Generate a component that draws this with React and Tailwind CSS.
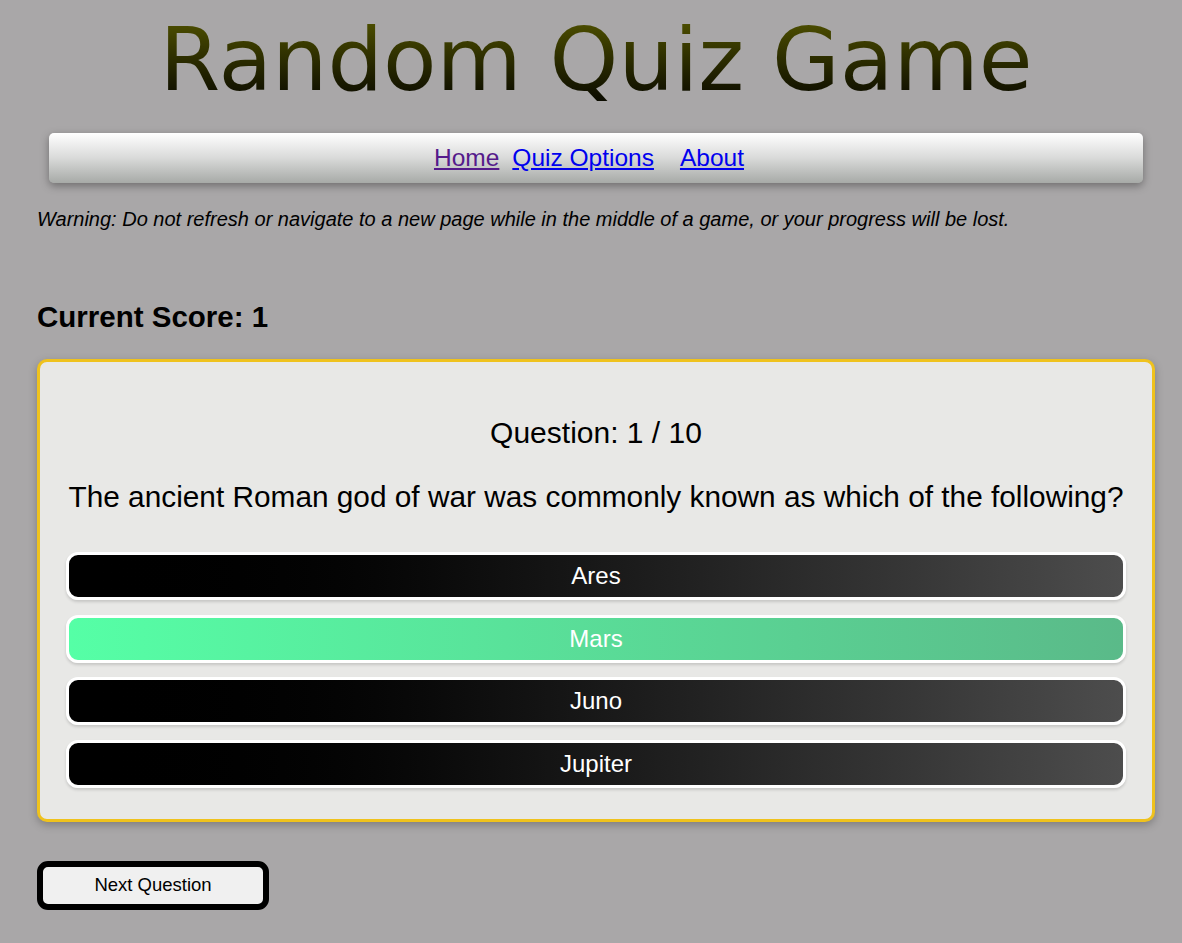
import React from 'react';

const ANSWERS = [
  { label: 'Ares', correct: false },
  { label: 'Mars', correct: true },
  { label: 'Juno', correct: false },
  { label: 'Jupiter', correct: false },
];

export default function App() {
  return (
    <div className="min-h-screen bg-[#a9a7a8] pl-[37px] pr-[27px] pb-8 font-['Liberation_Sans',Arial,sans-serif] text-black">
      {/* title */}
      <h1 className="pt-[8px] text-center font-['DejaVu_Sans',Verdana,sans-serif] text-[87.5px] leading-[104px] bg-gradient-to-b from-[#616300] to-[#050500] bg-clip-text text-transparent">
        Random Quiz Game
      </h1>

      {/* nav */}
      <nav className="mx-[12px] mt-[21px] h-[50px] rounded-[5px] bg-gradient-to-b from-[#ffffff] via-[#d9dad9] to-[#a7aaa7] shadow-[0_3px_8px_rgba(0,0,0,0.35)] flex items-center justify-center">
        <div className="flex items-center text-[24.5px] leading-none pr-[14px]">
          <a href="#" className="underline text-[#551a8b]">Home</a>
          <a href="#" className="underline text-[#0000ee] ml-[13px]">Quiz Options</a>
          <a href="#" className="underline text-[#0000ee] ml-[26px]">About</a>
        </div>
      </nav>

      <p className="mt-[24px] italic text-[20px] leading-[24px]">
        Warning: Do not refresh or navigate to a new page while in the middle of a game, or your progress will be lost.
      </p>

      <h2 className="mt-[69px] font-bold text-[29.5px] leading-[34px]">Current Score: 1</h2>

      {/* question card */}
      <div className="mt-[25px] rounded-[10px] border-[3px] border-[#efc21d] bg-[#e8e8e6] shadow-[0_3px_8px_rgba(0,0,0,0.25)] px-[26px] pt-[53px] pb-[31px]">
        <p className="text-center text-[30px] leading-[36px]">Question: 1 / 10</p>
        <p className="mt-[28px] text-center text-[29.8px] leading-[36px] whitespace-nowrap">
          The ancient Roman god of war was commonly known as which of the following?
        </p>
        <div className="mt-[37px] flex flex-col gap-[14.5px]">
          {ANSWERS.map((a) => (
            <button
              key={a.label}
              className={
                a.correct
                  ? 'h-[48px] w-full rounded-[12px] border-[3px] border-white bg-gradient-to-r from-[#55ffa6] to-[#5aba89] text-white text-[24px] shadow-[0_2px_3px_rgba(0,0,0,0.15)]'
                  : 'h-[48px] w-full rounded-[12px] border-[3px] border-white bg-gradient-to-r from-[#000000] to-[#4d4d4d] text-white text-[24px] shadow-[0_2px_3px_rgba(0,0,0,0.15)]'
              }
            >
              {a.label}
            </button>
          ))}
        </div>
      </div>

      <button className="mt-[39px] h-[49px] w-[232px] rounded-[11px] border-[6px] border-black bg-[#f0f0f0] text-[18.5px] text-black">
        Next Question
      </button>
    </div>
  );
}
